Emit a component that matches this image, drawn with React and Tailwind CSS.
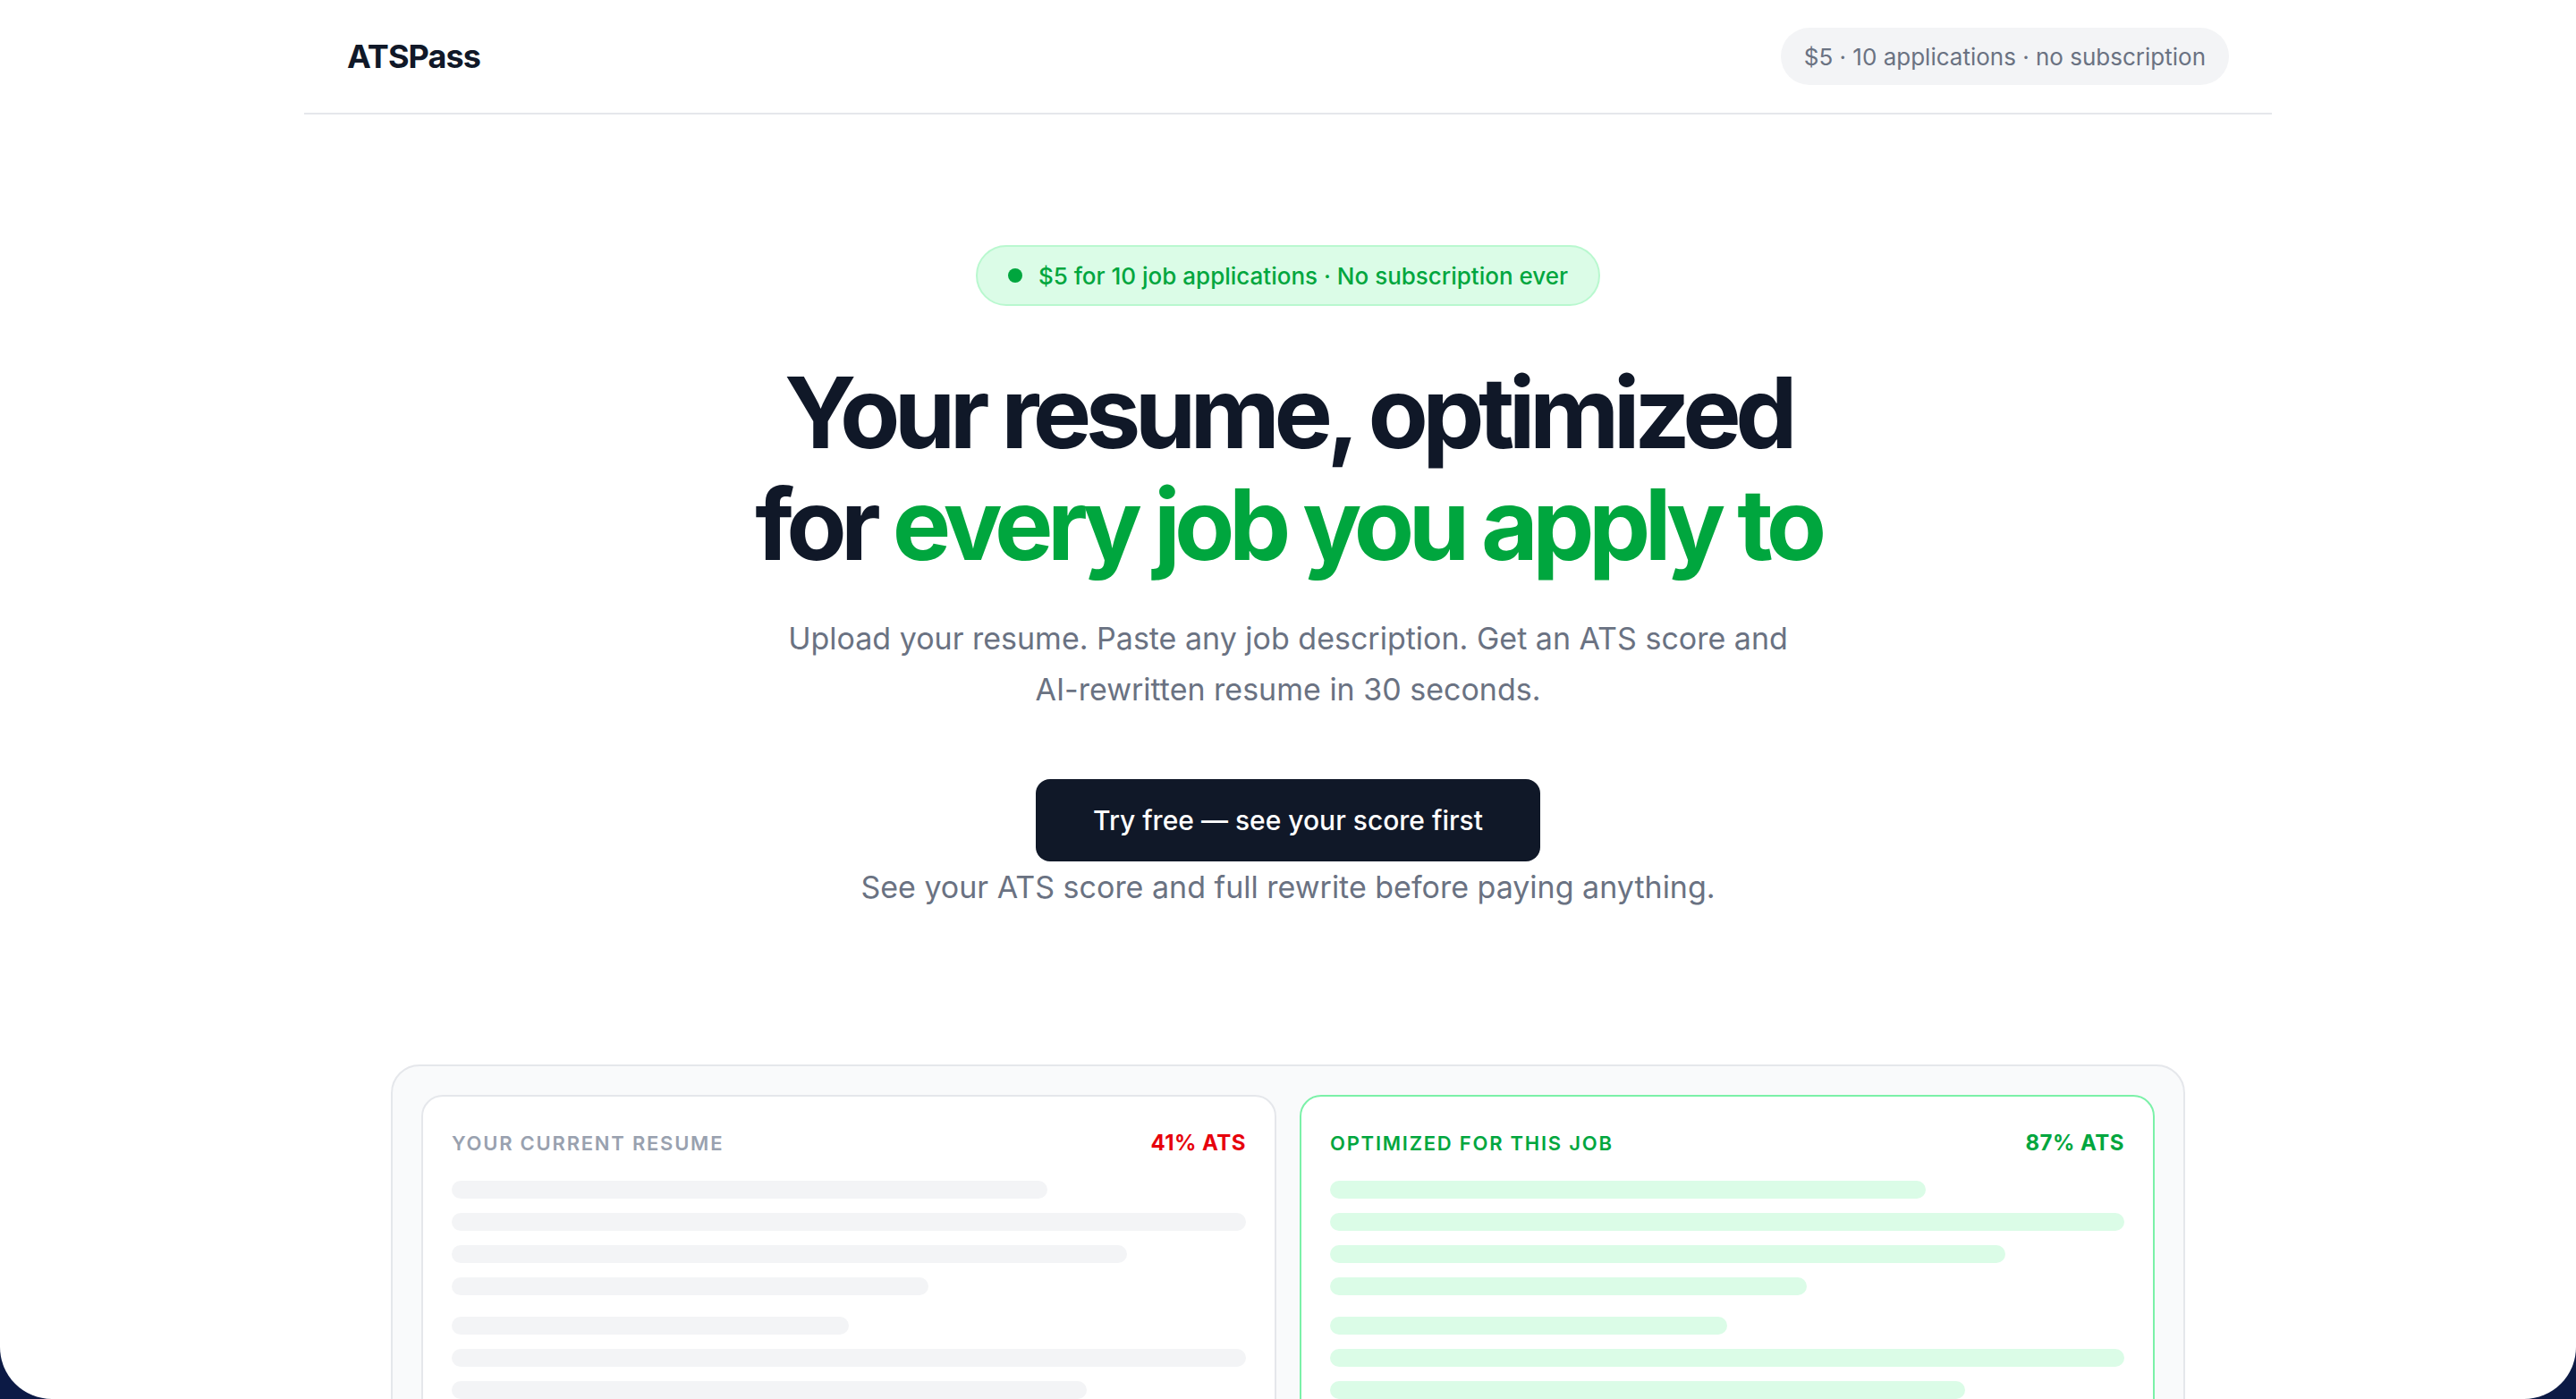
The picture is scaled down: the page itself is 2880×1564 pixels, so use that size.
const bars = [
  ["w-3/4", "w-full", "w-[85%]", "w-[60%]"],
  ["w-1/2", "w-full", "w-4/5", "w-[65%]"],
];

function ResumeCard({ label, score, tone }) {
  const good = tone === "good";
  return (
    <div
      className={`rounded-[24px] border-2 bg-white px-[32px] pt-[35px] pb-[60px] ${
        good ? "border-green-300" : "border-gray-200"
      }`}
    >
      <div className="flex items-center justify-between h-[34px]">
        <span
          className={`text-[22px] font-semibold uppercase tracking-[0.08em] ${
            good ? "text-green-600" : "text-gray-400"
          }`}
        >
          {label}
        </span>
        <span
          className={`text-[24px] font-bold tracking-[0.02em] ${
            good ? "text-green-600" : "text-red-600"
          }`}
        >
          {score}
        </span>
      </div>
      <div className="mt-[25px] flex flex-col gap-[24px]">
        {bars.map((group, i) => (
          <div key={i} className="flex flex-col gap-[16px]">
            {group.map((w, j) => (
              <div
                key={j}
                className={`h-[20px] rounded-full ${w} ${
                  good ? "bg-green-100" : "bg-gray-100"
                }`}
              />
            ))}
          </div>
        ))}
      </div>
    </div>
  );
}

export default function App() {
  return (
    <div
      className="h-[1564px] overflow-hidden bg-[#0c1a45]"
      style={{ fontFamily: "Inter, 'Noto Sans', sans-serif" }}
    >
      <div className="h-full overflow-hidden rounded-b-[58px] bg-white">
        <header className="mx-auto flex h-[128px] max-w-[2200px] items-center justify-between border-b-2 border-gray-200 px-[48px]">
          <span className="text-[36px] font-bold tracking-tight text-gray-900">
            ATSPass
          </span>
          <span className="flex h-[64px] items-center rounded-full bg-gray-100 px-[26px] text-[26px] text-gray-500">
            $5 · 10 applications · no subscription
          </span>
        </header>

        <main className="flex flex-col items-center pt-[146px]">
          <div className="flex h-[68px] items-center gap-[18px] rounded-full border-2 border-green-200 bg-green-100 px-[34px] text-[26px] font-medium text-green-600">
            <span className="h-[16px] w-[16px] rounded-full bg-green-600" />
            $5 for 10 job applications · No subscription ever
          </div>

          <h1 className="mt-[57px] text-center text-[110px] font-bold leading-[125px] tracking-[-0.06em] text-gray-900">
            Your resume, optimized
            <br />
            for <span className="text-green-600">every job you apply to</span>
          </h1>

          <p className="mt-[36px] max-w-[1130px] text-center text-[34px] leading-[57px] text-gray-500">
            Upload your resume. Paste any job description. Get an ATS score and
            AI-rewritten resume in 30 seconds.
          </p>

          <button className="mt-[72px] h-[92px] rounded-[16px] bg-gray-900 px-[64px] text-[30px] font-medium text-white">
            Try free — see your score first
          </button>
          <p className="mt-[2px] text-[34px] leading-[54px] text-gray-500">
            See your ATS score and full rewrite before paying anything.
          </p>

          <div className="mt-[171px] grid w-[2006px] grid-cols-2 gap-[26px] rounded-[32px] border-2 border-gray-200 bg-gray-50 p-[32px]">
            <ResumeCard label="Your current resume" score="41% ATS" tone="bad" />
            <ResumeCard label="Optimized for this job" score="87% ATS" tone="good" />
          </div>
        </main>
      </div>
    </div>
  );
}
